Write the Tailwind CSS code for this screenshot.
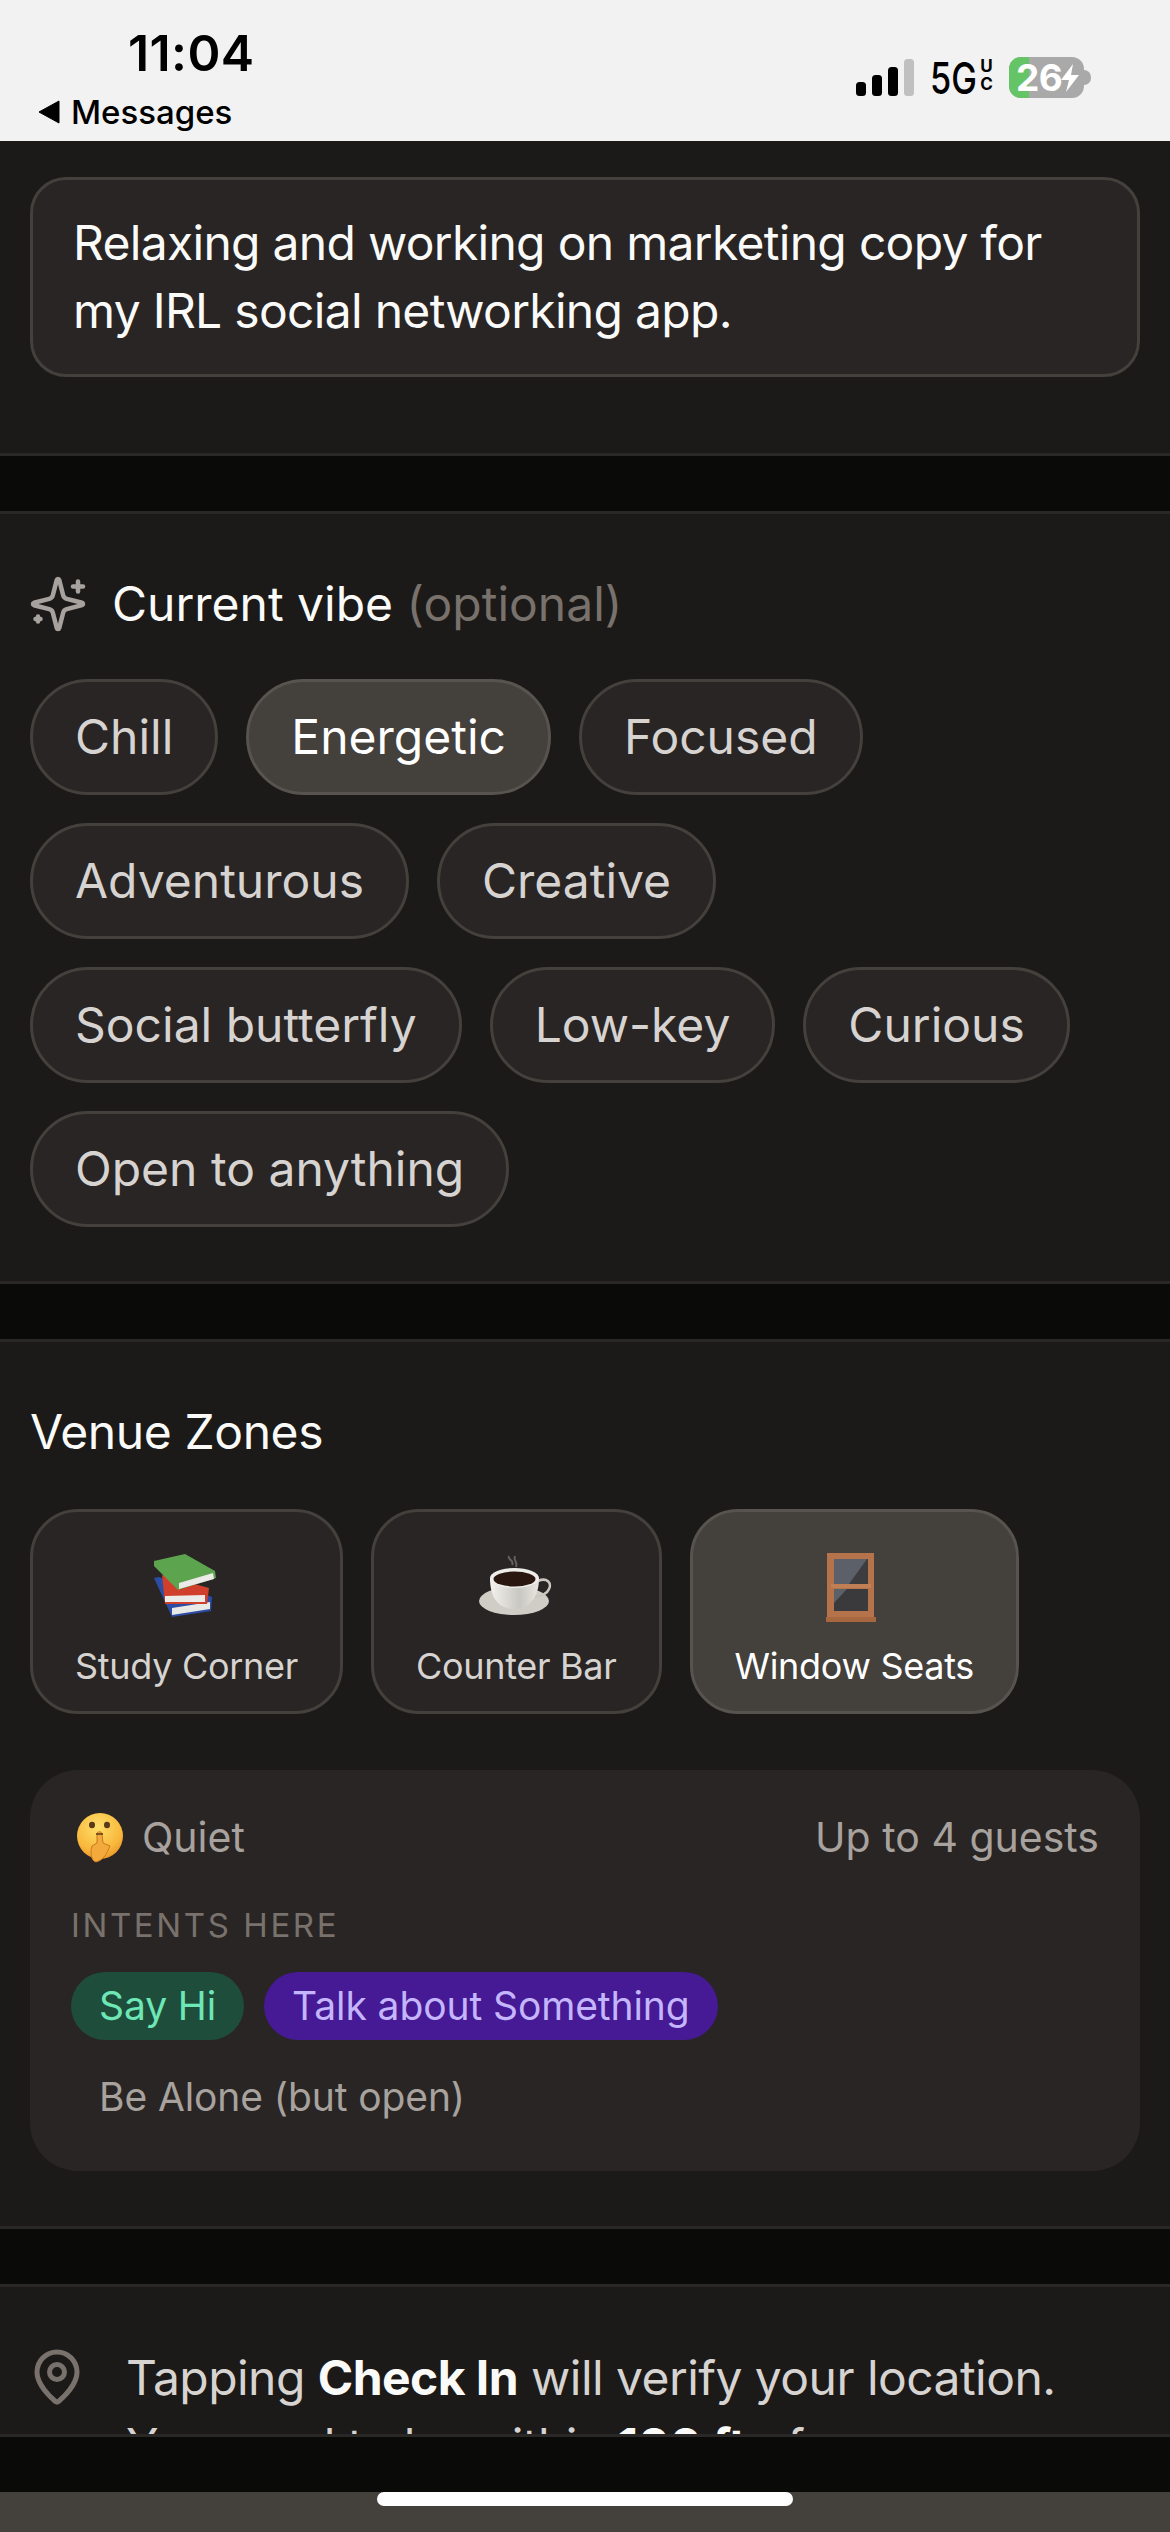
<!DOCTYPE html>
<html lang="en">
<head>
    <meta charset="UTF-8">
    <meta name="viewport" content="width=device-width, initial-scale=1.0">
    <title>Check In</title>
    <script src="https://cdn.jsdelivr.net/npm/@tailwindcss/browser@4"></script>
</head>
<body class="w-[1170px] h-[2532px] overflow-hidden bg-[#0a0a08] font-['Inter',sans-serif]">

    <!-- status bar -->
    <header class="relative z-10 h-[141px] bg-[#f2f2f2] flex justify-between text-black">
        <div class="flex flex-col pl-[38px] pt-[25px]">
            <div class="pl-[90px] h-[57px] text-[50px] leading-[57px] font-semibold tracking-[0.4px]">11:04</div>
            <div class="flex items-center gap-[11px] mt-[10px] h-[40px] text-[33px] leading-[40px] font-medium">
                <svg class="w-[22px] h-[24px]" viewBox="0 0 22 24"><path d="M21 1 V23 L1 12 Z" fill="#000" stroke="#000" stroke-linejoin="round"/></svg>
                <span>Messages</span>
            </div>
        </div>
        <div class="flex items-start pr-[79px] pt-[57px]">
            <svg class="w-[58px] h-[38px] mt-[2px]" viewBox="0 0 58 38">
                <rect x="0" y="23" width="10" height="14" rx="3.5" fill="#000"/>
                <rect x="16" y="16" width="10" height="21" rx="3.5" fill="#000"/>
                <rect x="32" y="8" width="10" height="29" rx="3.5" fill="#000"/>
                <rect x="48" y="0" width="10" height="37" rx="3.5" fill="#c0c0c0"/>
            </svg>
            <div class="w-[50px] ml-[16px] mt-[-1px] text-[44px] leading-[44px] font-medium scale-x-[0.78] origin-left">5G</div>
            <div class="flex flex-col items-center w-[13px] text-[17px] leading-[18px] font-bold">
                <span>U</span>
                <span>C</span>
            </div>
            <div class="relative ml-[16px] w-[75px] h-[41px] rounded-[12px] bg-[#a9a9a9] overflow-hidden">
                <div class="w-[20px] h-[41px] bg-[#65c466]"></div>
                <div class="absolute left-[7px] top-0 text-[37px] leading-[41px] font-bold text-white tracking-[-0.5px]">26</div>
                <svg class="absolute left-[51px] top-[7px] w-[20px] h-[28px]" viewBox="0 0 20 28"><path d="M13 0 L1 16 H9 L6 28 L19 11 H11 Z" fill="#fff"/></svg>
            </div>
            <div class="w-[7px] h-[15px] mt-[13px] rounded-r-full bg-[#a9a9a9]"></div>
        </div>
    </header>

    <main class="h-[2293px] overflow-hidden">
        <section class="-mt-[63px] bg-[#1b1a18] border-b-[3px] border-[#292826] px-[30px] pb-[76px]">
            <div class="flex items-center gap-[22px] h-[72px] mb-[27px]">
                <div class="w-[60px]"></div>
                <h2 class="text-[48px] leading-[72px] text-[#fafaf9] whitespace-nowrap">Say what's up today <span class="text-[#78716c]">(optional)</span></h2>
            </div>
            <div class="rounded-[36px] border-[3px] border-[#44403c] bg-[#292524] px-[40px] py-[29px] text-[48px] leading-[68px] tracking-[-0.7px] text-[#fafaf9]">
                Relaxing and working on marketing copy for<br>my IRL social networking app.
            </div>
        </section>

        <div class="h-[55px] bg-[#0a0a08]"></div>

        <section class="bg-[#1b1a18] border-y-[3px] border-[#292826] px-[30px] py-[54px]">
            <div class="flex items-center h-[72px] mb-[39px] -ml-[2px]">
                <svg class="w-[60px] h-[60px] mr-[24px]" viewBox="0 0 24 24" fill="none" stroke="#a8a29e" stroke-width="1.8" stroke-linecap="round" stroke-linejoin="round">
                    <path d="M9.937 15.5A2 2 0 0 0 8.5 14.063l-6.135-1.582a.5.5 0 0 1 0-.962L8.5 9.936A2 2 0 0 0 9.937 8.5l1.582-6.135a.5.5 0 0 1 .963 0L14.063 8.5A2 2 0 0 0 15.5 9.937l6.135 1.581a.5.5 0 0 1 0 .964L15.5 14.063a2 2 0 0 0-1.437 1.437l-1.582 6.135a.5.5 0 0 1-.963 0z"/>
                    <path d="M20 3v4"/><path d="M22 5h-4"/><path d="M4 17v2"/><path d="M5 18H3"/>
                </svg>
                <h2 class="text-[48px] leading-[72px] text-[#fafaf9]">Current vibe <span class="text-[#78716c]">(optional)</span></h2>
            </div>
            <div class="flex flex-wrap gap-[28px] text-[48px] leading-[110px] text-[#d6d3d1]">
                <span class="h-[116px] px-[42px] rounded-full border-[3px] border-[#44403c] bg-[#292524]">Chill</span>
                <span class="h-[116px] px-[42px] rounded-full border-[3px] border-[#57534e] bg-[#44403c] text-white">Energetic</span>
                <span class="h-[116px] px-[42px] rounded-full border-[3px] border-[#44403c] bg-[#292524]">Focused</span>
                <span class="h-[116px] px-[42px] rounded-full border-[3px] border-[#44403c] bg-[#292524]">Adventurous</span>
                <span class="h-[116px] px-[42px] rounded-full border-[3px] border-[#44403c] bg-[#292524]">Creative</span>
                <span class="h-[116px] px-[42px] rounded-full border-[3px] border-[#44403c] bg-[#292524]">Social butterfly</span>
                <span class="h-[116px] px-[42px] rounded-full border-[3px] border-[#44403c] bg-[#292524]">Low-key</span>
                <span class="h-[116px] px-[42px] rounded-full border-[3px] border-[#44403c] bg-[#292524]">Curious</span>
                <span class="h-[116px] px-[42px] rounded-full border-[3px] border-[#44403c] bg-[#292524]">Open to anything</span>
            </div>
        </section>

        <div class="h-[55px] bg-[#0a0a08]"></div>

        <section class="bg-[#1b1a18] border-y-[3px] border-[#292826] px-[30px] pt-[54px] pb-[55px]">
            <h2 class="text-[48px] leading-[72px] tracking-[-0.4px] mb-[41px] text-[#fafaf9]">Venue Zones</h2>
            <div class="flex gap-[28px] text-[36px] leading-[48px] tracking-[-0.3px] text-[#d6d3d1]">
                <div class="flex flex-col items-center h-[205px] pt-[29px] px-[42px] rounded-[48px] border-[3px] border-[#44403c] bg-[#292524]">
                    <svg class="w-[90px] h-[90px]" viewBox="0 0 90 90">
                        <path d="M13 37 L18 36 L71 56 L70 70 L31 76 Z" fill="#2c4da6"/>
                        <path d="M31 67 L69 61 L69 68 L31 74 Z" fill="#e8e8e6"/>
                        <path d="M21 34 L68 47 L66 63 L24 63 Z" fill="#cf3f2b"/>
                        <path d="M24 55 L64 54 L64 61 L24 61 Z" fill="#ecebe8"/>
                        <path d="M13 20 L44 13 L74 30 L75 37 L37 49 L13 25 Z" fill="#5da44e"/>
                        <path d="M38 42 L72 32 L73 38 L38 48 Z" fill="#ecebe8"/>
                    </svg>
                    <span class="mt-[11px]">Study Corner</span>
                </div>
                <div class="flex flex-col items-center h-[205px] pt-[29px] px-[42px] rounded-[48px] border-[3px] border-[#44403c] bg-[#292524]">
                    <svg class="w-[90px] h-[90px]" viewBox="0 0 90 90">
                        <defs>
                            <linearGradient id="cup" x1="0" y1="0" x2="1" y2="0">
                                <stop offset="0" stop-color="#f3f2ee"/>
                                <stop offset="0.6" stop-color="#c9c7c1"/>
                                <stop offset="1" stop-color="#e8e6e1"/>
                            </linearGradient>
                        </defs>
                        <ellipse cx="43" cy="60" rx="35" ry="14" fill="#cfcdc6"/>
                        <path d="M67 40 C76 36 81 42 78 48 C76 53 70 55 64 56" fill="none" stroke="#c9c7c0" stroke-width="2.5"/>
                        <path d="M19 37 C19 57 28 68 43 68 C58 68 68 57 68 37 Z" fill="url(#cup)"/>
                        <ellipse cx="43.5" cy="37" rx="24.5" ry="10" fill="#eeede9"/>
                        <ellipse cx="43.5" cy="38" rx="21" ry="7.5" fill="#2a1710"/>
                        <path d="M38 15 C36 19 44 19 41 24 M44 15 C42 20 47 20 45 26" fill="none" stroke="#8a8885" stroke-width="2" opacity="0.6"/>
                    </svg>
                    <span class="mt-[11px]">Counter Bar</span>
                </div>
                <div class="flex flex-col items-center h-[205px] pt-[29px] px-[42px] rounded-[48px] border-[3px] border-[#57534e] bg-[#44403c] text-white">
                    <svg class="w-[90px] h-[90px]" viewBox="0 0 90 90">
                        <rect x="18" y="12" width="47" height="66" fill="#b4734a"/>
                        <rect x="17" y="76" width="50" height="5" fill="#a8683f"/>
                        <rect x="25" y="18" width="34" height="25" fill="#3d3d40"/>
                        <path d="M25 18 H58 L40 43 H25 Z" fill="#5c6068"/>
                        <rect x="25" y="48" width="34" height="22" fill="#3a3a3c"/>
                        <path d="M25 48 H38 L25 62 Z" fill="#5c6068"/>
                        <rect x="22" y="43" width="40" height="4" fill="#c07f54"/>
                    </svg>
                    <span class="mt-[11px]">Window Seats</span>
                </div>
            </div>

            <div class="mt-[56px] h-[401px] rounded-[48px] bg-[#292524] px-[41px] pt-[41px]">
                <div class="flex items-center justify-between h-[54px] text-[41px] text-[#a8a29e]">
                    <div class="flex items-center gap-[17px]">
                        <svg class="w-[54px] h-[54px]" viewBox="11 11 54 54">
                            <defs>
                                <radialGradient id="face" cx="0.45" cy="0.3" r="0.8">
                                    <stop offset="0" stop-color="#ffdf6a"/>
                                    <stop offset="0.65" stop-color="#f8b83c"/>
                                    <stop offset="1" stop-color="#e58a1f"/>
                                </radialGradient>
                            </defs>
                            <circle cx="40" cy="36" r="23" fill="url(#face)"/>
                            <ellipse cx="32" cy="25" rx="3" ry="3.2" fill="#5b3a1a"/>
                            <ellipse cx="47" cy="25" rx="3" ry="3.2" fill="#5b3a1a"/>
                            <path d="M37 34 C37 31 42 31 42 34 L43 43 L50 46 C47 53 44 60 36 62 C31 61 30 52 32 46 L37 43 Z" fill="#f3a93c" stroke="#c87a1c" stroke-width="1"/>
                            <path d="M36 34 H43" stroke="#5b3a1a" stroke-width="1.5"/>
                        </svg>
                        <span>Quiet</span>
                    </div>
                    <span>Up to 4 guests</span>
                </div>
                <div class="mt-[36px] text-[33px] leading-[48px] tracking-[2.6px] text-[#78716c]">INTENTS HERE</div>
                <div class="mt-[23px] flex flex-wrap gap-x-[20px] gap-y-[23px] text-[39px] leading-[68px] tracking-[-0.1px]">
                    <span class="h-[68px] px-[28px] rounded-full bg-[#1f4d3b] text-[#6ee7b7]">Say Hi</span>
                    <span class="h-[68px] px-[28px] rounded-full bg-[#451a94] text-[#c4b5fd]">Talk about Something</span>
                    <span class="h-[68px] px-[28px] rounded-full text-[#a8a29e] basis-full">Be Alone (but open)</span>
                </div>
            </div>
        </section>

        <div class="h-[55px] bg-[#0a0a08]"></div>

        <section class="bg-[#1b1a18] border-t-[3px] border-[#292826] pl-[27px] pt-[57px] flex gap-[39px]">
            <svg class="w-[60px] h-[60px] mt-[3px] shrink-0" viewBox="0 0 24 24" fill="none" stroke="#78716c" stroke-width="2" stroke-linecap="round" stroke-linejoin="round">
                <path d="M20 10c0 4.993-5.539 10.193-7.399 11.799a1 1 0 0 1-1.202 0C9.539 20.193 4 14.993 4 10a8 8 0 0 1 16 0"/>
                <circle cx="12" cy="10" r="3"/>
            </svg>
            <p class="text-[48px] leading-[68px] tracking-[-0.55px] text-[#d6d3d1]">
                Tapping <b class="font-bold text-[#fafaf9]">Check In</b> will verify your location.<br>You need to be within <b class="font-bold text-[#fafaf9]">100 ft</b> of
            </p>
        </section>
    </main>

    <footer>
        <div class="h-[3px] bg-[#292826]"></div>
        <div class="h-[55px] bg-[#0a0a08]"></div>
        <div class="h-[40px] bg-[#44403c] flex justify-center">
            <div class="w-[416px] h-[14px] rounded-full bg-white"></div>
        </div>
    </footer>
</body>
</html>
